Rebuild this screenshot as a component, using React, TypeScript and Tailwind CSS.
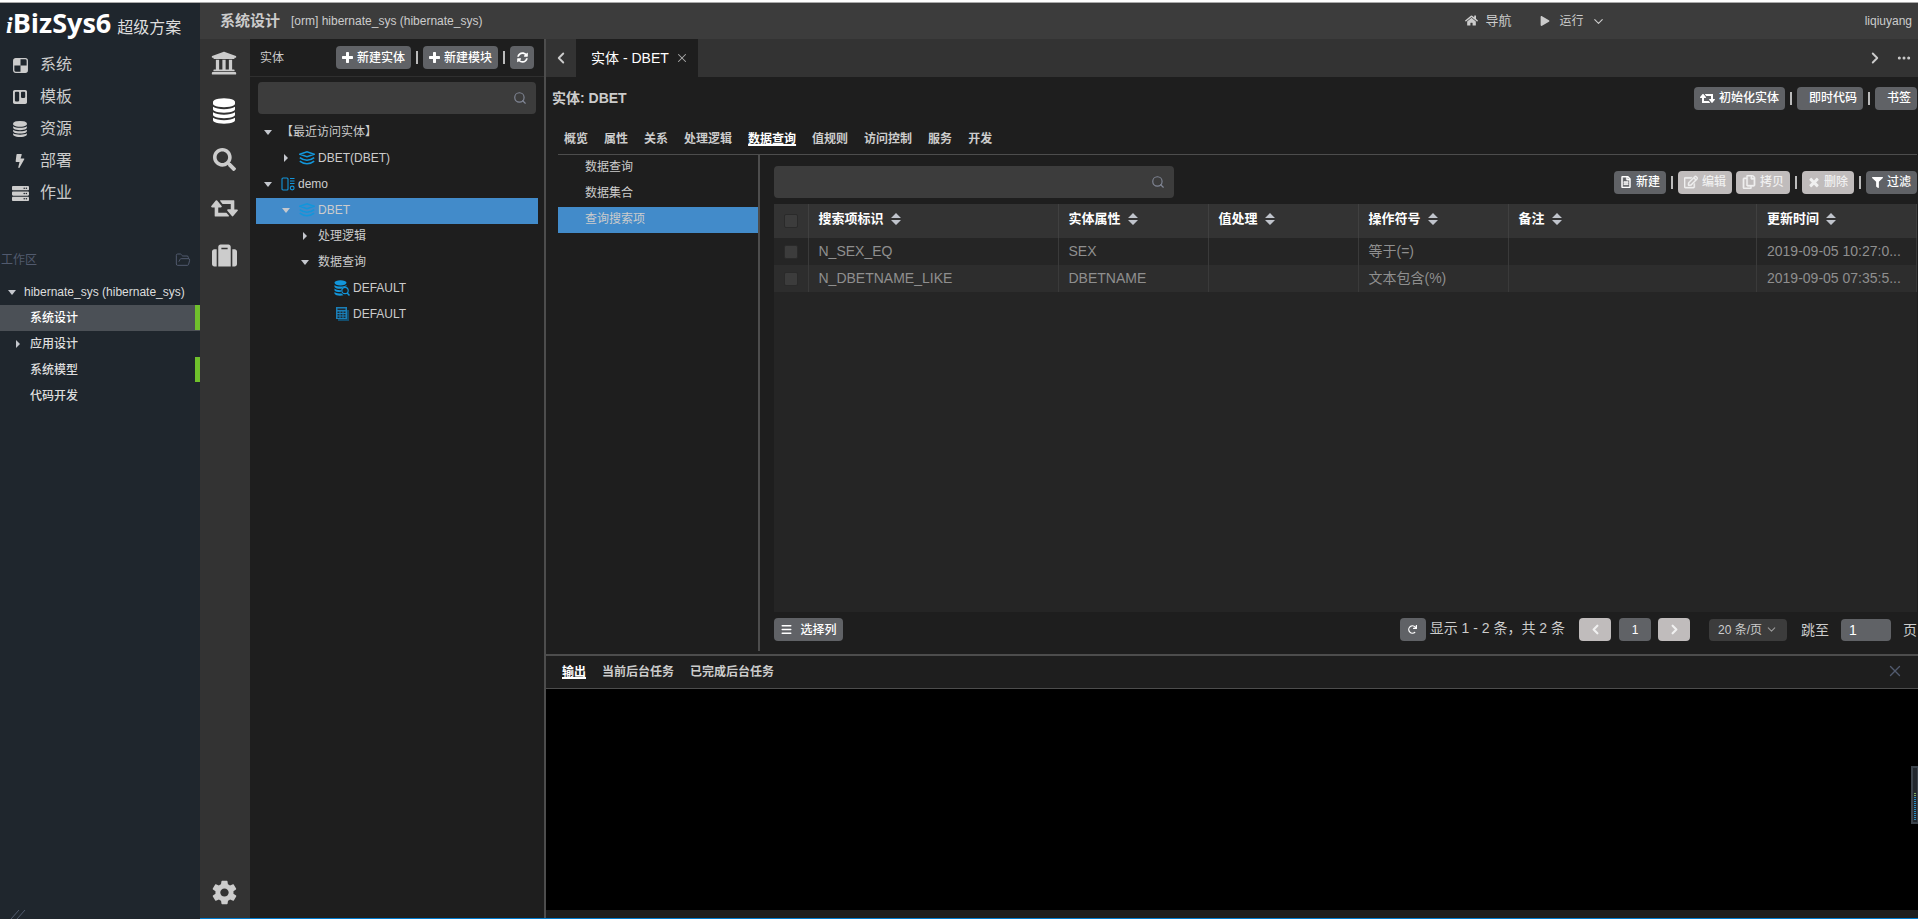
import type { ReactNode } from "react";
import {
  FaUniversity, FaSearch, FaSuitcase, FaSyncAlt, FaHome, FaPlay,
  FaRegFileAlt, FaRegEdit, FaRegCopy, FaFilter, FaTrello, FaBolt, FaServer, FaRedo,
} from "react-icons/fa";
import { IoMdSettings } from "react-icons/io";
import { ChevronDown, ChevronLeft, ChevronRight, FolderOpen, Menu, Search, X, Ellipsis } from "lucide-react";

function Retweet({ width, height }: { width: number; height: number }) {
  return (
    <svg width={width} height={height} viewBox="0 0 1920 1792" fill="currentColor" className="shrink-0">
      <path d="M1280 1504q0 13-9.5 22.5t-22.5 9.5h-960q-8 0-13.5-2t-9-7-5.5-8-3-11.5-1-11.5v-608h-192q-26 0-45-19t-19-45q0-24 15-41l320-384q19-22 49-22t49 22l320 384q15 17 15 41 0 26-19 45t-45 19h-192v384h576q16 0 25 11l160 192q7 10 7 21zm640-416q0 24-15 41l-320 384q-20 23-49 23t-49-23l-320-384q-15-17-15-41 0-26 19-45t45-19h192v-384h-576q-16 0-25-12l-160-192q-7-9-7-20 0-13 9.5-22.5t22.5-9.5h960q8 0 13.5 2t9 7 5.5 8 3 11.5 1 11.5v608h192q26 0 45 19t19 45z" />
    </svg>
  );
}

function Database({ width, height }: { width: number; height: number }) {
  return (
    <svg width={width} height={height} viewBox="0 0 1536 1792" fill="currentColor" className="shrink-0">
      <path d="M768 768q237 0 443-43t325-127v170q0 69-103 128t-280 93.5-385 34.5-385-34.5-280-93.5-103-128v-170q119 84 325 127t443 43zm0 768q237 0 443-43t325-127v170q0 69-103 128t-280 93.5-385 34.5-385-34.5-280-93.5-103-128v-170q119 84 325 127t443 43zm0-384q237 0 443-43t325-127v170q0 69-103 128t-280 93.5-385 34.5-385-34.5-280-93.5-103-128v-170q119 84 325 127t443 43zm0-1152q208 0 385 34.5t280 93.5 103 128v128q0 69-103 128t-280 93.5-385 34.5-385-34.5-280-93.5-103-128v-128q0-69 103-128t280-93.5 385-34.5z" />
    </svg>
  );
}

function Plus() {
  return (
    <svg width="11" height="14" viewBox="0 0 1408 1792" fill="currentColor" className="shrink-0">
      <path d="M1408 736v192q0 40-28 68t-68 28h-416v416q0 40-28 68t-68 28h-192q-40 0-68-28t-28-68v-416h-416q-40 0-68-28t-28-68v-192q0-40 28-68t68-28h416v-416q0-40 28-68t68-28h192q40 0 68 28t28 68v416h416q40 0 68 28t28 68z" />
    </svg>
  );
}

function Cross() {
  return (
    <svg width="12" height="14" viewBox="0 0 1408 1792" fill="currentColor" className="shrink-0">
      <path d="M1298 1322q0 40-28 68l-136 136q-28 28-68 28t-68-28l-294-294-294 294q-28 28-68 28t-68-28l-136-136q-28-28-28-68t28-68l294-294-294-294q-28-28-28-68t28-68l136-136q28-28 68-28t68 28l294 294 294-294q28-28 68-28t68 28l136 136q28 28 28 68t-28 68l-294 294 294 294q28 28 28 68z" />
    </svg>
  );
}

function Caret({ open }: { open: boolean }) {
  return (
    <svg width="8" height="8" viewBox="0 0 8 8" fill="#c5c8ce" className="shrink-0">
      {open ? <path d="M0 2h8L4 7z" /> : <path d="M2 0v8l4-4z" />}
    </svg>
  );
}

function Layers() {
  return (
    <svg width="16" height="14" viewBox="0 0 16 14" fill="none" stroke="#1296db" strokeWidth="1.5" className="shrink-0">
      <path d="M.8 3.2L8 .8l7.200 2.400L8 5.600zM.8 6.600Q4 9.200 8 9.200t7.200-2.600M.8 10.200Q4 12.800 8 12.800t7.200-2.600" />
    </svg>
  );
}

function ModuleIcon() {
  return (
    <svg width="14" height="14" viewBox="0 0 14 14" fill="none" stroke="#1296db" strokeWidth="1.1" className="shrink-0">
      <rect x="1" y="1" width="6" height="12" rx="1" />
      <path d="M9 1.500h4.500M9 4h4.500M9 6.500h4.500" />
      <circle cx="11.200" cy="11" r="1.900" />
    </svg>
  );
}

function DbSearch() {
  return (
    <svg width="16" height="16" viewBox="0 0 16 16" className="shrink-0">
      <g fill="#1296db">
        <ellipse cx="6.5" cy="2.8" rx="6" ry="2.6" />
        <path d="M.5 5c2 2 9 2.3 12 0v1.600c-2 .2-4 .8-5 2.200-3 .2-6-.3-7-1.800zM.5 8.600c1.500 1.200 4 1.700 6.300 1.500v2c-3 .1-5.300-.5-6.300-1.700zM.5 12c1.500 1.200 4 1.500 7 1.500l2 1.800c-4 .9-8 .2-9-1.600z" />
      </g>
      <circle cx="11" cy="10.5" r="3.2" fill="none" stroke="#1296db" strokeWidth="1.2" />
      <path d="M13.2 13l2.300 2.500" stroke="#1296db" strokeWidth="1.5" />
    </svg>
  );
}

function GridStack() {
  return (
    <svg width="16" height="14" viewBox="0 0 16 14" className="shrink-0">
      <path d="M4 3h11v11H4z" fill="#134d6c" />
      <path d="M2 0h11v12H2z" fill="#1a7fb8" />
      <path d="M3.500 1.500h8v1.500h-8zM3.500 4.500h2V6h-2zM6.500 4.500h2V6h-2zM9.500 4.500h2V6h-2zM3.500 7h2v1.500h-2zM6.500 7h2v1.500h-2zM9.500 7h2v1.500h-2zM3.500 9.500h2V11h-2zM6.500 9.500h2V11h-2zM9.500 9.500h2V11h-2z" fill="#1e2a32" />
    </svg>
  );
}

function CheckerIcon() {
  return (
    <svg width="15" height="15" viewBox="0 0 15 15">
      <rect x=".7" y=".7" width="13.6" height="13.6" rx="2" fill="none" stroke="#ccc" strokeWidth="1.3" />
      <path d="M1 1h6.500v6.500H1zM7.500 7.500H14V14H7.500z" fill="#ccc" />
    </svg>
  );
}

const btnBase = "flex h-[23px] items-center justify-center gap-1 rounded text-xs whitespace-nowrap font-medium";

function Btn({ icon, label, children, disabled, className = "px-[6px]" }: {
  icon?: ReactNode; label?: string; children?: ReactNode; disabled?: boolean; className?: string;
}) {
  return (
    <button
      type="button"
      disabled={disabled}
      aria-label={label}
      className={`${btnBase} ${className} ${disabled ? "bg-[#c0bcbc] text-[#f0f0f0]" : "bg-[#606266] text-white"}`}
    >
      {icon}
      {children}
    </button>
  );
}

function Sep() {
  return <span className="mx-[5px] h-[13px] w-[2px] shrink-0 bg-[#bbbbbb]" />;
}

function SearchBox({ label, className }: { label: string; className: string }) {
  return (
    <label className={`flex h-8 items-center rounded bg-[#3c3c3c] pr-[9px] ${className}`}>
      <input type="text" aria-label={label} className="h-full min-w-0 flex-1 bg-transparent px-2 text-sm text-[#cccccc] outline-none" />
      <Search size={14} color="#808695" strokeWidth={2} />
    </label>
  );
}

const menu = [
  { text: "系统", icon: <CheckerIcon /> },
  { text: "模板", icon: <FaTrello size={16} /> },
  { text: "资源", icon: <Database width={14} height={16} /> },
  { text: "部署", icon: <FaBolt size={14} /> },
  { text: "作业", icon: <FaServer size={17} /> },
];

const workspace = [
  { text: "系统设计", active: true, mark: true, open: false },
  { text: "应用设计", active: false, mark: false, open: true },
  { text: "系统模型", active: false, mark: true, open: false },
  { text: "代码开发", active: false, mark: false, open: false },
];

function Sidebar() {
  return (
    <aside className="flex w-[200px] shrink-0 flex-col bg-[#1f262d] text-[#dddddd]">
      <div className="flex h-[46px] items-baseline gap-[6px] pt-[2px] pl-[6px] whitespace-nowrap">
        <span className="font-['Open_Sans'] text-[27px] leading-9 font-bold text-white">
          <i className="font-['Liberation_Serif'] text-2xl">i</i>BizSys6
        </span>
        <span className="text-base">超级方案</span>
      </div>
      <nav>
        {menu.map((m) => (
          <a key={m.text} href="#" className="flex h-8 items-center text-base text-[#cccccc]">
            <span className="flex w-10 justify-center">{m.icon}</span>
            {m.text}
          </a>
        ))}
      </nav>
      <div className="mt-9 flex h-[30px] items-center justify-between pr-[9px] pl-[1px] text-xs text-[#515a6e]">
        工作区
        <FolderOpen size={16} strokeWidth={1.5} />
      </div>
      <div className="mt-1 text-xs font-medium">
        <div className="flex h-[26px] items-center gap-2 pl-2 whitespace-nowrap">
          <Caret open />
          hibernate_sys (hibernate_sys)
        </div>
        {workspace.map((w) => (
          <a
            key={w.text}
            href="#"
            className={`flex h-[26px] items-start justify-between ${w.active ? "bg-[#4b5056] text-white" : ""}`}
          >
            <span className="flex h-full items-center">
              <span className="flex w-[30px] justify-center pl-[6px]">{w.open && <Caret open={false} />}</span>
              {w.text}
            </span>
            {w.mark && <span className="h-[25px] w-[5px] bg-[#6fc02c]" />}
          </a>
        ))}
      </div>
      <svg width="16" height="9" viewBox="0 0 16 9" stroke="#515a6e" className="mt-auto ml-[11px]">
        <path d="M0 9l8-9M6 9l8-9" />
      </svg>
    </aside>
  );
}

function IconBar() {
  const items: [string, ReactNode][] = [
    ["机构", <FaUniversity size={26} />],
    ["实体", <span className="text-white"><Database width={22} height={26} /></span>],
    ["搜索", <FaSearch size={23} />],
    ["同步", <Retweet width={27} height={25} />],
    ["工具", <FaSuitcase size={25} />],
  ];
  return (
    <div className="flex w-[50px] shrink-0 flex-col bg-[#333333] pr-[2px] text-[#cccccc]">
      {items.map(([label, icon]) => (
        <button key={label} type="button" aria-label={label} className="flex h-12 items-center justify-center">
          {icon}
        </button>
      ))}
      <button type="button" aria-label="设置" className="mt-auto mb-[2px] flex h-12 items-center justify-center">
        <IoMdSettings size={29} />
      </button>
    </div>
  );
}

const tree: { pad: string; open?: boolean; icon?: ReactNode; text: string; active?: boolean }[] = [
  { pad: "pl-2", open: true, text: "【最近访问实体】" },
  { pad: "pl-[26px]", open: false, icon: <Layers />, text: "DBET(DBET)" },
  { pad: "pl-2", open: true, icon: <ModuleIcon />, text: "demo" },
  { pad: "pl-[26px]", open: true, icon: <Layers />, text: "DBET", active: true },
  { pad: "pl-[45px]", open: false, text: "处理逻辑" },
  { pad: "pl-[45px]", open: true, text: "数据查询" },
  { pad: "pl-[78px]", icon: <DbSearch />, text: "DEFAULT" },
  { pad: "pl-[78px]", icon: <GridStack />, text: "DEFAULT" },
];

function TreePanel() {
  return (
    <section className="flex w-[296px] shrink-0 flex-col border-r-2 border-[#4d4d4d]">
      <header className="flex h-[38px] items-center border-b border-[#2f2f2f] pr-[10px] pl-[10px] text-xs">
        <span className="mr-auto">实体</span>
        <Btn icon={<Plus />}>新建实体</Btn>
        <Sep />
        <Btn icon={<Plus />}>新建模块</Btn>
        <Sep />
        <Btn label="刷新" className="w-6"><FaSyncAlt size={11} /></Btn>
      </header>
      <SearchBox label="搜索实体" className="mx-2 mt-[5px] mb-[6px]" />
      <ul className="mx-[6px] text-xs">
        {tree.map((t, i) => (
          <li
            key={i}
            className={`flex h-[26px] items-center pb-[2px] whitespace-nowrap ${t.pad} ${t.active ? "bg-[#428bca]" : ""}`}
          >
            {t.open !== undefined && <span className="mr-[9px] flex"><Caret open={t.open} /></span>}
            {t.icon && <span className="mr-[3px] flex">{t.icon}</span>}
            {t.text}
          </li>
        ))}
      </ul>
    </section>
  );
}

const columns = [
  { title: "搜索项标识", width: "w-[250px]" },
  { title: "实体属性", width: "w-[150px]" },
  { title: "值处理", width: "w-[150px]" },
  { title: "操作符号", width: "w-[150px]" },
  { title: "备注", width: "" },
  { title: "更新时间", width: "w-[160px]" },
];

const rows = [
  ["N_SEX_EQ", "SEX", "", "等于(=)", "", "2019-09-05 10:27:0..."],
  ["N_DBETNAME_LIKE", "DBETNAME", "", "文本包含(%)", "", "2019-09-05 07:35:5..."],
];

function Tick({ label }: { label: string }) {
  return (
    <input
      type="checkbox"
      aria-label={label}
      className="mx-auto block size-[14px] appearance-none rounded-xs border border-[#2a2a2a] bg-[#3c3c3c]"
    />
  );
}

function DataTable() {
  return (
    <div className="min-h-0 flex-1 bg-[#252525]">
      <table className="w-full table-fixed border-collapse text-left">
        <thead>
          <tr className="h-[34px] bg-[#333333] text-[13px] text-white">
            <th className="w-[34px] border-r border-[#404040]"><Tick label="全选" /></th>
            {columns.map((c) => (
              <th key={c.title} className={`border-r border-[#404040] pb-1 pl-[10px] font-bold ${c.width}`}>
                <span className="flex items-center gap-[7px] leading-5">
                  {c.title}
                  <svg width="10" height="12" viewBox="0 0 10 12" fill="#c0c4cc">
                    <path d="M0 5l5-5 5 5zM0 7l5 5 5-5z" />
                  </svg>
                </span>
              </th>
            ))}
          </tr>
        </thead>
        <tbody>
          {rows.map((r, i) => (
            <tr key={r[0]} className={`h-[27px] text-sm text-[#8f8f8f] ${i % 2 ? "bg-[#2d2d2d]" : "bg-[#252525]"}`}>
              <td className="border-r border-[#3a3a3a]"><Tick label={r[0]} /></td>
              {r.map((v, j) => (
                <td key={j} className="overflow-hidden border-r border-[#3a3a3a] pb-[2px] pl-[10px] whitespace-nowrap">{v}</td>
              ))}
            </tr>
          ))}
        </tbody>
      </table>
    </div>
  );
}

function Pagination() {
  return (
    <footer className="flex h-[42px] shrink-0 items-start justify-between pt-[6px] text-sm whitespace-nowrap">
      <Btn className="w-[69px]" icon={<Menu size={13} strokeWidth={2.5} className="mr-[3px]" />}>选择列</Btn>
      <div className="flex items-center">
        <Btn label="刷新" className="w-[26px]"><FaRedo size={9} /></Btn>
        <span className="mr-[14px] mb-[3px] ml-1">显示 1 - 2 条，共 2 条</span>
        <Btn label="上一页" disabled className="mr-2 w-8"><ChevronLeft size={15} strokeWidth={3.5} /></Btn>
        <Btn className="mr-[7px] w-8 text-sm">1</Btn>
        <Btn label="下一页" disabled className="mr-[19px] w-8"><ChevronRight size={15} strokeWidth={3.5} /></Btn>
        <div className="relative mr-[14px] flex items-center">
          <select aria-label="每页条数" className="h-[22px] w-[78px] appearance-none rounded bg-[#3c3c3c] pl-[9px] text-xs">
            <option>20 条/页</option>
          </select>
          <ChevronDown size={13} color="#999999" className="pointer-events-none absolute right-[9px]" />
        </div>
        <label className="flex items-center gap-3">
          跳至
          <input type="text" defaultValue="1" className="h-[22px] w-[50px] rounded bg-[#606266] px-2 text-sm text-white" />
          页
        </label>
      </div>
    </footer>
  );
}

const tabs = ["概览", "属性", "关系", "处理逻辑", "数据查询", "值规则", "访问控制", "服务", "开发"];

function Editor() {
  return (
    <div className="flex min-h-0 flex-1 flex-col pr-px">
      <header className="flex h-[46px] items-center pb-1 pl-[6px] text-sm font-bold">
        <h1 className="mr-auto">实体: DBET</h1>
        <Btn icon={<Retweet width={15} height={14} />}>初始化实体</Btn>
        <Sep />
        <Btn className="pr-[6px] pl-3">即时代码</Btn>
        <Sep />
        <Btn className="pr-[6px] pl-3">书签</Btn>
      </header>
      <nav className="ml-3 flex h-8 shrink-0 items-center gap-4 border-b border-[#4d4d4d] pl-[6px] text-xs font-bold">
        {tabs.map((t) => (
          <a key={t} href="#" className={t === "数据查询" ? "text-white underline decoration-2" : ""}>{t}</a>
        ))}
      </nav>
      <div className="ml-3 flex min-h-0 flex-1">
        <ul className="mb-[3px] w-[202px] shrink-0 border-r-2 border-[#4d4d4d] text-xs">
          {["数据查询", "数据集合", "查询搜索项"].map((t) => (
            <li key={t} className={`flex h-[26px] items-center pb-[2px] pl-[27px] ${t === "查询搜索项" ? "bg-[#428bca]" : ""}`}>{t}</li>
          ))}
        </ul>
        <div className="ml-[14px] flex min-w-0 flex-1 flex-col">
          <div className="flex h-[49px] shrink-0 items-center pt-[5px]">
            <SearchBox label="搜索" className="mr-auto w-[400px]" />
            <Btn icon={<FaRegFileAlt size={12} stroke="currentColor" strokeWidth={20} />}>新建</Btn>
            <Sep />
            <Btn disabled icon={<FaRegEdit size={14} stroke="currentColor" strokeWidth={16} />}>编辑</Btn>
            <span className="w-1" />
            <Btn disabled icon={<FaRegCopy size={14} stroke="currentColor" strokeWidth={16} />}>拷贝</Btn>
            <Sep />
            <Btn disabled icon={<Cross />}>删除</Btn>
            <Sep />
            <Btn icon={<FaFilter size={11} />}>过滤</Btn>
          </div>
          <DataTable />
          <Pagination />
        </div>
      </div>
    </div>
  );
}

function Output() {
  return (
    <section className="flex h-[264px] shrink-0 flex-col border-t-2 border-[#4d4d4d]">
      <header className="flex h-[33px] shrink-0 items-center gap-4 border-b border-[#4d4d4d] pr-[14px] pl-4 text-xs font-bold">
        <a href="#" className="text-white underline decoration-2">输出</a>
        <a href="#">当前后台任务</a>
        <a href="#">已完成后台任务</a>
        <button type="button" aria-label="关闭" className="mb-[2px] ml-auto text-[#515a6e]"><X size={18} strokeWidth={1.8} /></button>
      </header>
      <div className="mb-2 flex flex-1 items-start justify-end bg-black pt-[77px]">
        <div className="flex h-[58px] w-[7px] flex-col justify-end gap-px border-2 border-r border-[#3c444c] bg-[#23282e] pb-[2px]">
          {Array.from({ length: 14 }, (_, i) => (
            <span key={i} className={`h-px w-[2px] self-center ${i < 2 ? "bg-[#7fb069]" : "bg-[#2a8fc4]"}`} />
          ))}
        </div>
      </div>
    </section>
  );
}

export default function App() {
  return (
    <div className="flex h-screen min-h-[700px] flex-col overflow-hidden bg-[#1e1e1e] font-['Liberation_Sans','Noto_Sans_CJK_SC',sans-serif] text-[#cccccc]">
      <div className="h-[3px] shrink-0 border-b border-[#aaaaaa] bg-white" />
      <div className="flex min-h-0 flex-1">
        <Sidebar />
        <div className="flex min-w-0 flex-1 flex-col border-b border-[#007acc]">
          <header className="flex h-9 shrink-0 items-center bg-[#3c3c3c] pr-[6px] pl-5 text-xs whitespace-nowrap">
            <h2 className="mr-[11px] text-[15px] font-bold">系统设计</h2>
            <span className="mr-auto">[orm] hibernate_sys (hibernate_sys)</span>
            <button type="button" className="mr-7 flex items-center gap-2 text-[13px]"><FaHome size={13} />导航</button>
            <button type="button" className="mr-[259px] flex items-center gap-[7px]">
              <FaPlay size={10} className="mr-[3px]" />运行<ChevronDown size={15} strokeWidth={1.8} />
            </button>
            <span>liqiuyang</span>
          </header>
          <div className="flex min-h-0 flex-1">
            <IconBar />
            <TreePanel />
            <main className="flex min-w-0 flex-1 flex-col">
              <div className="flex h-[38px] shrink-0 items-stretch bg-[#333333]">
                <button type="button" aria-label="向左" className="flex w-[30px] items-center justify-center"><ChevronLeft size={18} strokeWidth={2.5} /></button>
                <div className="flex w-[122px] items-center gap-[6px] bg-[#1e1e1e] pl-[15px] text-sm whitespace-nowrap text-white">
                  实体 - DBET
                  <button type="button" aria-label="关闭标签" className="text-[#aaaaaa]"><X size={14} strokeWidth={1.8} /></button>
                </div>
                <button type="button" aria-label="向右" className="ml-auto flex w-[30px] items-center justify-center"><ChevronRight size={18} strokeWidth={2.5} /></button>
                <button type="button" aria-label="更多" className="flex w-[28px] items-center justify-center"><Ellipsis size={16} strokeWidth={2.5} /></button>
              </div>
              <Editor />
              <Output />
            </main>
          </div>
        </div>
      </div>
    </div>
  );
}
